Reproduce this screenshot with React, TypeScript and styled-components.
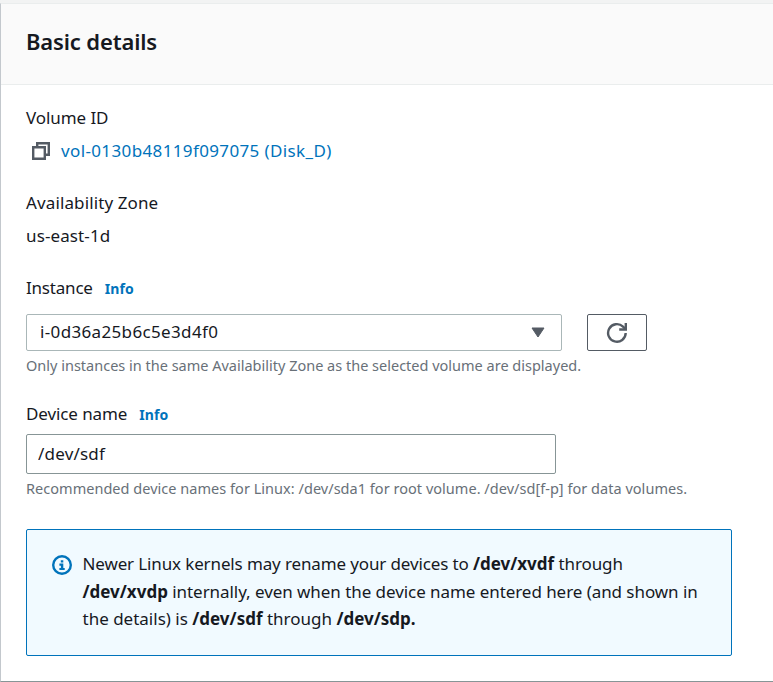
import React from 'react';
import styled, { createGlobalStyle } from 'styled-components';

const GlobalStyle = createGlobalStyle`
  *, *::before, *::after { box-sizing: border-box; }
  body {
    margin: 0;
    background: #f2f3f3;
    color: #16191f;
    font-family: "Noto Sans", "Open Sans", sans-serif;
    font-size: 17px;
    line-height: 24px;
    overflow: hidden;
  }
`;

const Page = styled.main`
  height: 682px;
  padding-top: 3px;
  background: #f2f3f3;
`;

const Panel = styled.section`
  height: 679px;
  background: #fff;
  border-top: 1px solid #eaeded;
  border-left: 1px solid #c3c8cd;
  border-bottom: 1px solid #879596;
`;

const PanelHeader = styled.header`
  height: 81px;
  padding: 22px 25px 0;
  background: #fafafa;
  border-bottom: 1px solid #eaeded;
`;

const Title = styled.h2`
  margin: 0;
  font-size: 22px;
  font-weight: 650;
  line-height: 30px;
  letter-spacing: -0.15px;
  white-space: nowrap;
`;

const PanelBody = styled.div`
  display: flex;
  flex-direction: column;
  padding: 21px 41px 0 25px;
`;

const Field = styled.div<{ $gap: number }>`
  display: flex;
  flex-direction: column;
  margin-bottom: ${p => p.$gap}px;
`;

const Text = styled.span<{ $track?: number }>`
  letter-spacing: ${p => p.$track ?? 0}px;
  white-space: nowrap;
`;

const LabelRow = styled.div<{ $gap: number }>`
  display: flex;
  align-items: baseline;
  gap: 12px;
  height: 24px;
  margin-bottom: ${p => p.$gap}px;
`;

const InfoLink = styled.a`
  color: #0073bb;
  font-size: 14px;
  font-weight: 700;
  letter-spacing: 0.1px;
  text-decoration: none;
`;

const ValueRow = styled.div`
  display: flex;
  align-items: center;
  height: 24px;
`;

const CopyButton = styled.button`
  display: flex;
  width: 35px;
  padding: 0 0 0 6px;
  border: 0;
  background: none;
`;

const VolumeLink = styled.a`
  color: #0073bb;
  letter-spacing: 0.37px;
  text-decoration: none;
  white-space: nowrap;
`;

const ControlRow = styled.div`
  display: flex;
  gap: 25px;
`;

const Select = styled.div`
  display: flex;
  align-items: center;
  justify-content: space-between;
  width: 536px;
  height: 37px;
  padding: 0 16px 1px 13px;
  border: 1px solid #aab7b8;
  border-radius: 2px;
  background: #fff;
`;

const SelectValue = styled(Text)`
  line-height: 23px;
  padding-bottom: 1px;
`;

const RefreshButton = styled.button`
  display: flex;
  align-items: center;
  justify-content: center;
  width: 60px;
  height: 37px;
  padding: 0;
  border: 1px solid #545b64;
  border-radius: 2px;
  background: #fff;
`;

const Input = styled.input`
  width: 530px;
  height: 40px;
  padding: 0 11px 2px;
  border: 1px solid #879596;
  border-radius: 2px;
  background: #fff;
  color: #16191f;
  font: inherit;
  letter-spacing: 0.2px;
`;

const Hint = styled.p<{ $track: number }>`
  margin: 4px 0 0;
  color: #687078;
  font-size: 14.5px;
  line-height: 20px;
  letter-spacing: ${p => p.$track}px;
  white-space: nowrap;
`;

const Alert = styled.div`
  display: flex;
  height: 127px;
  padding: 20px 25px;
  border: 1px solid #0073bb;
  border-radius: 2px;
  background: #f1faff;
`;

const AlertIcon = styled.div`
  flex: none;
  width: 30.5px;
  padding-top: 5px;
`;

const AlertText = styled.p`
  margin: 0;
  line-height: 27.5px;
  white-space: nowrap;
`;

function CopyIcon() {
  return (
    <svg width="18" height="18" viewBox="0 0 18 18" fill="none" stroke="#545b64" strokeWidth="2.4">
      <path d="M1.2 5.2h11.6v11.6H1.2z" />
      <path d="M5.2 5V1.2h11.6v11.6H13" />
    </svg>
  );
}

function CaretIcon() {
  return (
    <svg width="14" height="11" viewBox="0 0 14 11">
      <path d="M1 1h12L7 10z" fill="#545b64" stroke="#545b64" strokeLinejoin="round" />
    </svg>
  );
}

function RefreshIcon() {
  return (
    <svg width="22" height="22" viewBox="0 0 22 22" fill="none" stroke="#545b64" strokeWidth="2.4">
      <path d="M19.7 11A8.8 8.8 0 1 1 17 4.6l2.5 2.5" />
      <path d="M13.2 7.5h6.6V.9" />
    </svg>
  );
}

function InfoIcon() {
  return (
    <svg width="20" height="20" viewBox="0 0 20 20" fill="none">
      <circle cx="10" cy="10" r="8.8" stroke="#0073bb" strokeWidth="2.4" />
      <path d="M8.8 5.2h2.5v2.2H8.8zM7.4 8.6h3.9v4.3h1.4V15H7.4v-2.1h1.5v-2.2H7.4z" fill="#0073bb" />
    </svg>
  );
}

export default function App() {
  return (
    <>
      <GlobalStyle />
      <Page>
        <Panel>
          <PanelHeader>
            <Title>Basic details</Title>
          </PanelHeader>
          <PanelBody>
            <Field $gap={28}>
              <LabelRow $gap={9}>
                <Text $track={-0.08}>Volume ID</Text>
              </LabelRow>
              <ValueRow>
                <CopyButton aria-label="Copy volume ID">
                  <CopyIcon />
                </CopyButton>
                <VolumeLink>vol-0130b48119f097075 (Disk_D)</VolumeLink>
              </ValueRow>
            </Field>
            <Field $gap={28}>
              <LabelRow $gap={9}>
                <Text $track={0.12}>Availability Zone</Text>
              </LabelRow>
              <ValueRow>
                <Text $track={0.12}>us-east-1d</Text>
              </ValueRow>
            </Field>
            <Field $gap={27}>
              <LabelRow $gap={14}>
                <Text $track={-0.2}>Instance</Text>
                <InfoLink>Info</InfoLink>
              </LabelRow>
              <ControlRow>
                <Select>
                  <SelectValue $track={0.35}>i-0d36a25b6c5e3d4f0</SelectValue>
                  <CaretIcon />
                </Select>
                <RefreshButton aria-label="Refresh instances">
                  <RefreshIcon />
                </RefreshButton>
              </ControlRow>
              <Hint $track={0}>
                Only instances in the same Availability Zone as the selected volume are displayed.
              </Hint>
            </Field>
            <Field $gap={31}>
              <LabelRow $gap={8}>
                <Text $track={-0.1}>Device name</Text>
                <InfoLink>Info</InfoLink>
              </LabelRow>
              <Input aria-label="Device name" defaultValue="/dev/sdf" />
              <Hint $track={0.03}>
                Recommended device names for Linux: /dev/sda1 for root volume. /dev/sd[f-p] for data volumes.
              </Hint>
            </Field>
            <Alert>
              <AlertIcon>
                <InfoIcon />
              </AlertIcon>
              <AlertText>
                <Text $track={-0.13}>Newer Linux kernels may rename your devices to </Text>
                <b>/dev/xvdf</b>
                <Text $track={-0.1}> through</Text>
                <br />
                <b>/dev/xvdp</b>
                <Text $track={-0.06}> internally, even when the device name entered here (and shown in</Text>
                <br />
                <Text>the details) is </Text>
                <b>/dev/sdf</b>
                <Text> through </Text>
                <b>/dev/sdp.</b>
              </AlertText>
            </Alert>
          </PanelBody>
        </Panel>
      </Page>
    </>
  );
}
